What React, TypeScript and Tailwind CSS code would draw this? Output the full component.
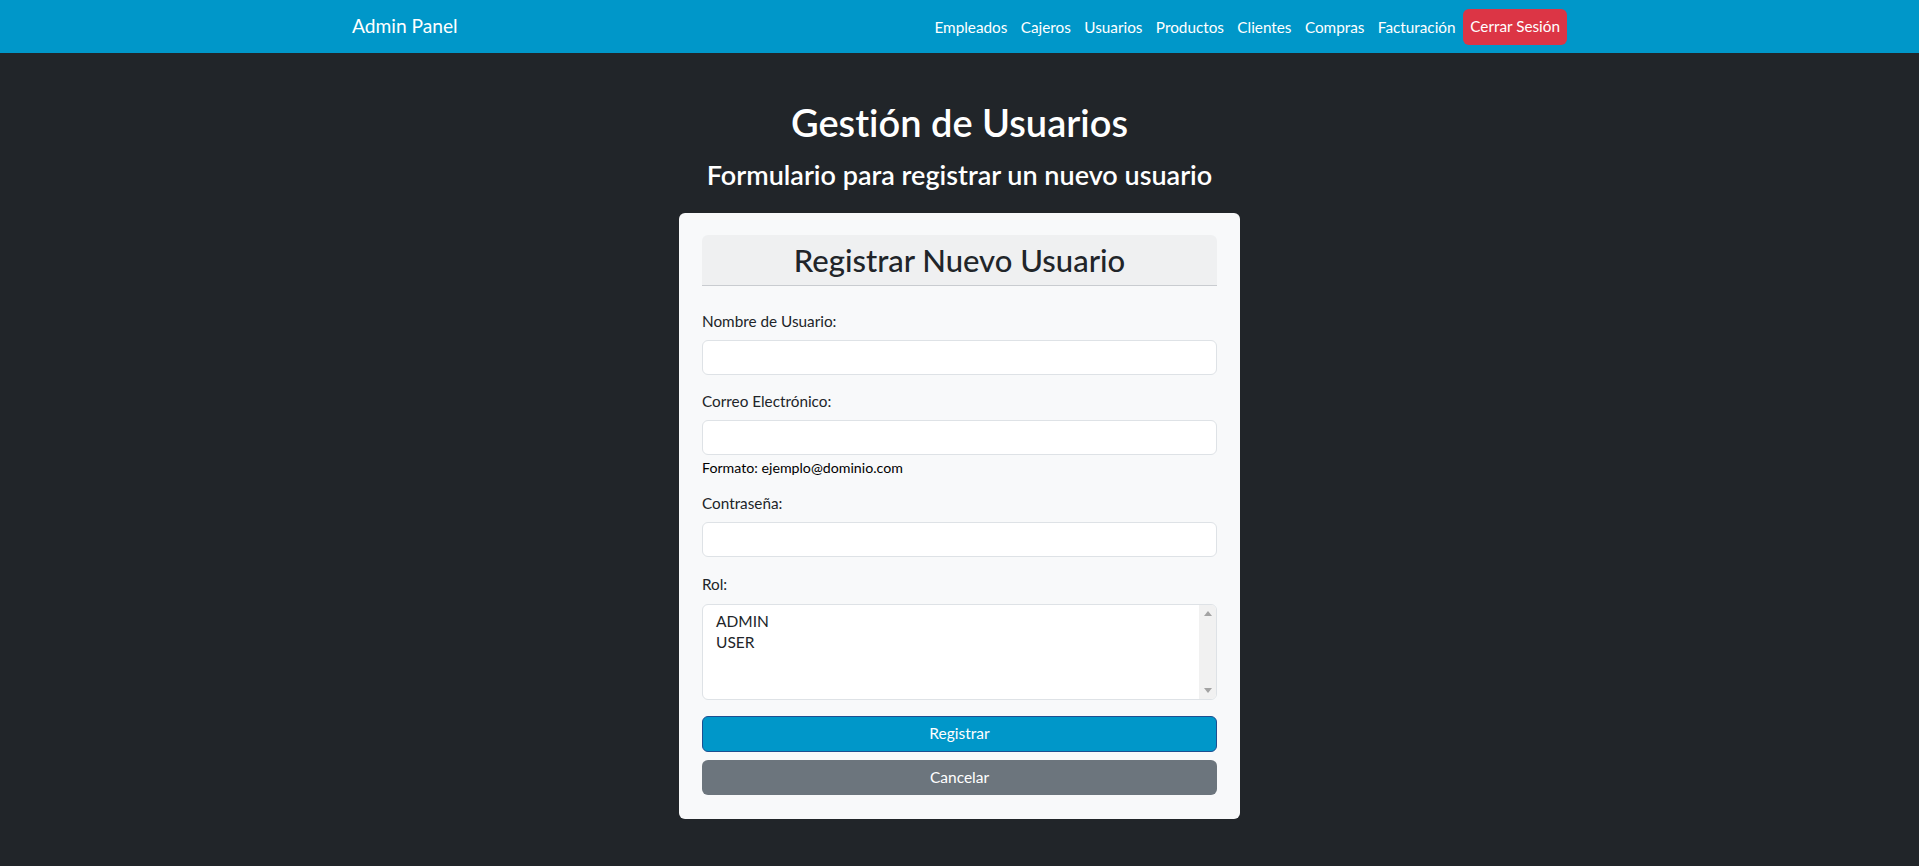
import React from "react";

const links = ["Empleados", "Cajeros", "Usuarios", "Productos", "Clientes", "Compras", "Facturación"];

function Field({ label, children }: { label: string; children: React.ReactNode }) {
  return (
    <div className="flex flex-col">
      <label className="text-[15.3px] leading-[24px] text-[#212529] mb-[7px]">{label}</label>
      {children}
    </div>
  );
}

function Input() {
  return <div className="h-[35px] w-full rounded-[6px] border border-[#dee2e6] bg-white" />;
}

export default function App() {
  return (
    <div className="min-h-[866px] bg-[#212529] font-['Lato','Open_Sans',sans-serif] [font-variant-ligatures:none]">
      <nav className="h-[53px] bg-[#0097c9]">
        <div className="mx-auto flex h-full w-[1215px] items-center justify-between">
          <span className="text-[19.2px] text-white">Admin Panel</span>
          <div className="flex items-center">
            {links.map((l) => (
              <a key={l} className="px-[6.7px] text-[15.3px] leading-[24px] text-white">
                {l}
              </a>
            ))}
            <button className="ml-[1px] h-[36px] rounded-[6px] bg-[#dc3545] px-[7px] text-[15.3px] text-white">
              Cerrar Sesión
            </button>
          </div>
        </div>
      </nav>

      <main className="flex flex-col items-center pt-[45px]">
        <h1 className="text-[38px] font-semibold leading-[48px] text-white">Gestión de Usuarios</h1>
        <h2 className="mt-[14px] text-[27px] font-semibold leading-[29px] text-white">
          Formulario para registrar un nuevo usuario
        </h2>

        <div className="mt-[24px] w-[561px] rounded-[6px] bg-[#f8f9fa] px-[23px] pt-[22px] pb-[24px]">
          <div className="rounded-t-[6px] border-b border-[#c9ccd0] bg-[#eff0f1] py-[6px] text-center text-[31px] font-medium leading-[38px] text-[#212529]">
            Registrar Nuevo Usuario
          </div>

          <div className="mt-[23px] flex flex-col">
            <Field label="Nombre de Usuario:">
              <Input />
            </Field>
            <div className="mt-[14px]">
              <Field label="Correo Electrónico:">
                <Input />
                <span className="mt-[2px] text-[14.2px] leading-[21px] text-black">Formato: ejemplo@dominio.com</span>
              </Field>
            </div>
            <div className="mt-[13px]">
              <Field label="Contraseña:">
                <Input />
              </Field>
            </div>
            <div className="mt-[15px]">
              <div className="flex flex-col">
                <label className="text-[15.3px] leading-[24px] text-[#212529] mb-[8px]">Rol:</label>
                <div className="flex h-[96px] w-full overflow-hidden rounded-[6px] border border-[#dee2e6] bg-white">
                  <div className="flex-1 pl-[13px] pt-[6px] text-[15.5px] leading-[21px] text-[#212529]">
                    <div>ADMIN</div>
                    <div>USER</div>
                  </div>
                  <div className="flex w-[17px] flex-col items-center justify-between bg-[#f1f1f1] py-[6px]">
                    <svg width="8" height="5" viewBox="0 0 8 5">
                      <path d="M0 5 L4 0 L8 5 Z" fill="#a3a3a3" />
                    </svg>
                    <svg width="8" height="5" viewBox="0 0 8 5">
                      <path d="M0 0 L4 5 L8 0 Z" fill="#a3a3a3" />
                    </svg>
                  </div>
                </div>
              </div>
            </div>

            <button className="mt-[16px] h-[36px] w-full rounded-[6px] border border-[#1d4f91] bg-[#0097c9] text-[15.5px] text-white">
              Registrar
            </button>
            <button className="mt-[8px] h-[35px] w-full rounded-[6px] bg-[#6c757d] text-[15.5px] text-white">
              Cancelar
            </button>
          </div>
        </div>
      </main>
    </div>
  );
}
